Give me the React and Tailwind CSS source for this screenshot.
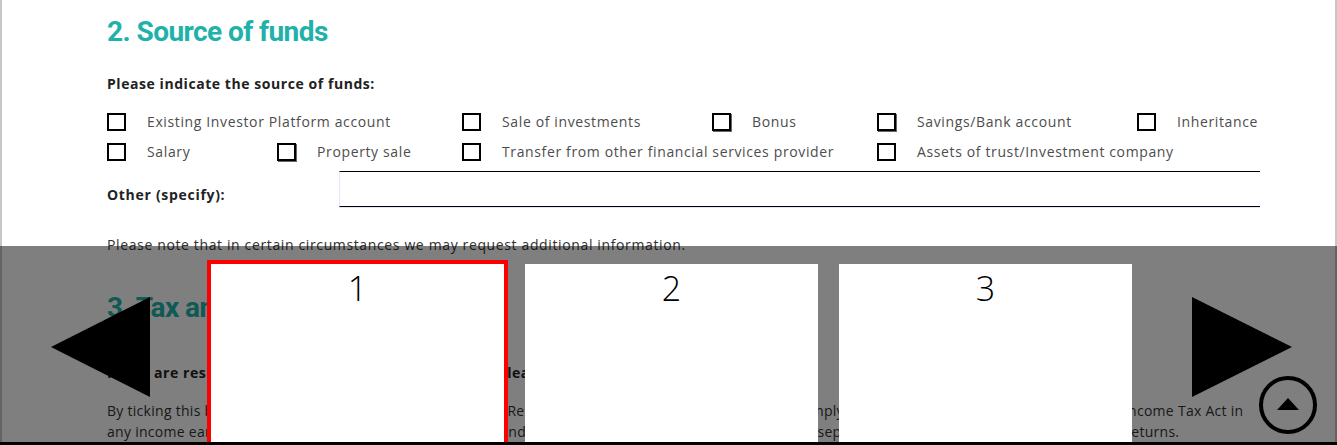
import React from 'react';

const ROW_ONE = [
  { label: 'Existing Investor Platform account', w: 'w-[355px]' },
  { label: 'Sale of investments', w: 'w-[250px]' },
  { label: 'Bonus', w: 'w-[165px]', heavy: true },
  { label: 'Savings/Bank account', w: 'w-[260px]', heavy: true },
  { label: 'Inheritance', w: '' },
];

const ROW_TWO = [
  { label: 'Salary', w: 'w-[170px]' },
  { label: 'Property sale', w: 'w-[185px]', heavy: true },
  { label: 'Transfer from other financial services provider', w: 'w-[415px]' },
  { label: 'Assets of trust/Investment company', w: '' },
];

function Check({ label, w, heavy }) {
  return (
    <div className={`flex items-center shrink-0 ${w}`}>
      <span
        className={`w-[19px] h-[18px] border-2 border-black shrink-0 ${heavy ? 'shadow-[1px_1px_0_#666]' : ''}`}
      />
      <span className="ml-[21px] text-[14px] leading-[20px] text-[#4d4d4d] tracking-[0.045em] whitespace-nowrap">
        {label}
      </span>
    </div>
  );
}

function Thumb({ n, active }) {
  return (
    <div
      className={`w-[293px] shrink-0 bg-white flex justify-center ${active ? 'outline-4 outline-solid outline-[#ff0000]' : ''}`}
    >
      <span className="text-[34px] leading-[48px] font-light text-black font-['Open_Sans',sans-serif]">{n}</span>
    </div>
  );
}

export default function App() {
  return (
    <div className="relative w-[1337px] h-[445px] overflow-hidden bg-white font-['Open_Sans',sans-serif]">
      {/* document page behind the viewer */}
      <div className="h-full border-l-2 border-r-2 border-[#c6c6c6] pl-[105px] pr-[75px] flex flex-col">
        <h2 className="mt-[14px] h-[36px] leading-[36px] text-[28px] font-bold text-[#20b2aa] tracking-[-0.02em] font-['Roboto',sans-serif]">
          2. Source of funds
        </h2>
        <p className="mt-[24px] text-[14px] leading-[20px] font-bold text-[#222] tracking-[0.04em]">
          Please indicate the source of funds:
        </p>
        <div className="mt-[18px] flex h-[20px]">
          {ROW_ONE.map((c) => (
            <Check key={c.label} {...c} />
          ))}
        </div>
        <div className="mt-[10px] flex h-[20px]">
          {ROW_TWO.map((c) => (
            <Check key={c.label} {...c} />
          ))}
        </div>
        <div className="mt-[9px] flex items-end">
          <span className="w-[232px] mb-[2px] text-[14px] leading-[20px] font-bold text-[#222] tracking-[0.05em]">
            Other (specify):
          </span>
          <div className="w-[921px] h-[36px] border-t border-b border-black border-l border-l-[#e6e6ff] shadow-[0_1px_0_#e4e4fb]" />
        </div>
        <p className="mt-[28px] text-[14px] leading-[20px] text-[#333] tracking-[0.045em]">
          Please note that in certain circumstances we may request additional information.
        </p>
        <h2 className="mt-[35px] h-[36px] leading-[36px] text-[28px] font-bold text-[#20b2aa] tracking-[-0.02em] font-['Roboto',sans-serif]">
          3. Tax and residency
        </h2>
        <p className="mt-[37px] text-[14px] leading-[20px] font-bold text-[#222] tracking-[0.04em]">
          If you are resident in South Africa for tax purposes, please tick the box below:
        </p>
        <p className="mt-[17px] text-[14px] leading-[21px] text-[#333] tracking-[0.02em] whitespace-nowrap">
          By ticking this box, I confirm that I am a tax resident of the Republic of South Africa and undertake to comply fully with all applicable provisions of the Income Tax Act in
          <br />
          any income earned in the Republic of South Africa (&quot;RSA&quot;) and that I will also not need to declare it again separately in my annual personal income tax returns.
        </p>
      </div>

      {/* page picker overlay */}
      <div className="absolute left-0 right-0 top-[246px] bottom-0 bg-black/50 flex flex-col">
        <div className="flex-1 flex pl-[51px]">
          <svg width="99" height="100" viewBox="0 0 99 100" className="mt-[51px] shrink-0">
            <polygon points="99,0 99,100 0,50" fill="#000" />
          </svg>
          <div className="ml-[61px] mt-[18px] flex gap-[21px]">
            <Thumb n="1" active />
            <Thumb n="2" />
            <Thumb n="3" />
          </div>
          <svg width="100" height="100" viewBox="0 0 100 100" className="ml-[60px] mt-[51px] shrink-0">
            <polygon points="0,0 0,100 100,50" fill="#000" />
          </svg>
        </div>
        <div className="h-[3px] bg-black" />
        <button className="absolute left-[1259px] top-[130px] w-[58px] h-[58px] rounded-full border-4 border-black flex items-center justify-center">
          <svg width="22" height="12" viewBox="0 0 22 12" className="-mt-[2px]">
            <polygon points="11,0 22,12 0,12" fill="#000" />
          </svg>
        </button>
      </div>
    </div>
  );
}
